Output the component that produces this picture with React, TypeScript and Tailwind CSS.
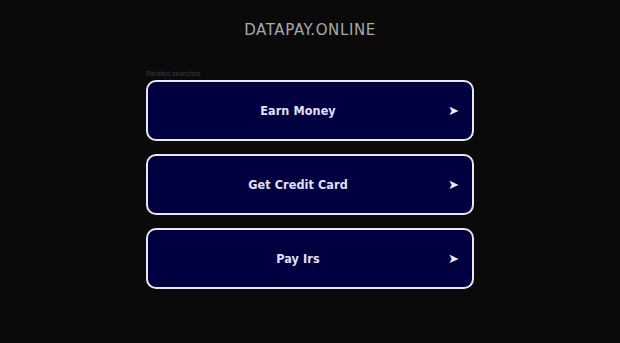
export default function App() {
  const items = ["Earn Money", "Get Credit Card", "Pay Irs"];
  return (
    <div className="w-[620px] h-[343px] bg-[#0a0a0a] flex flex-col items-center" style={{ fontFamily: '"DejaVu Sans", sans-serif' }}>
      <div className="mt-[20px] h-[20px] text-[15px] leading-[20px] tracking-[0.6px] text-[#a9a9a9]">DATAPAY.ONLINE</div>
      <div className="mt-[29px] w-[328px] flex flex-col">
        <div className="text-[7px] leading-[9px] text-[#3a3a3a]" style={{ fontFamily: '"Liberation Sans", sans-serif' }}>Related searches</div>
        <div className="mt-[2px] flex flex-col gap-[13px]">
          {items.map((t) => (
            <div key={t} className="relative h-[61px] rounded-[10px] border-2 border-[#e8e8f0] bg-[#000040] flex items-center justify-center pr-[24px] pt-[2px]">
              <span className="text-[12.5px] font-bold text-[#e0e0f8] tracking-[0.1px] [font-stretch:condensed]">{t}</span>
              <span className="absolute right-[13px] top-[calc(50%-1px)] -translate-y-1/2 text-[13px] leading-none text-[#eeeef8]">➤</span>
            </div>
          ))}
        </div>
      </div>
    </div>
  );
}
